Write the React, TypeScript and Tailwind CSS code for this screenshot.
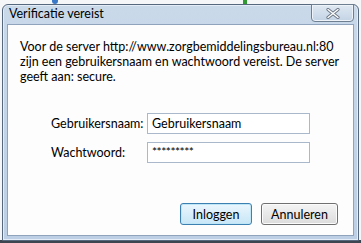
import React from "react";

const font = { fontFamily: 'Lato, "Open Sans", sans-serif' };

function CloseGlyph() {
  return (
    <svg width="14" height="11" viewBox="0 0 14 11">
      <path d="M2 1.5 L12 9.5 M12 1.5 L2 9.5" stroke="#6b7684" strokeWidth="3.2" strokeLinecap="round" />
      <path d="M2 1.5 L12 9.5 M12 1.5 L2 9.5" stroke="#ffffff" strokeWidth="1.4" strokeLinecap="round" />
    </svg>
  );
}

export default function App() {
  return (
    <div className="relative h-[243px] w-[361px] overflow-hidden bg-[#f4f6f8]" style={font}>
      {/* bits of other windows behind */}
      <div className="absolute left-[52px] top-0 h-[4px] w-[6px] rounded-b bg-[#3a78c8]" />
      <div className="absolute left-[243px] top-0 h-[4px] w-[4px] bg-[#2f9a2f]" />
      <div className="absolute bottom-0 left-0 h-[3px] w-full bg-[#3d4650]" />

      <div className="pl-[2px] pt-[4px]">
        <div className="relative flex h-[237px] w-[357px] flex-col rounded-t-[6px] border border-[#56687e] bg-gradient-to-b from-[#c9d9ea] to-[#bccfe4] shadow-[inset_0_0_0_1px_#e4edf7]">
          <div className="flex h-[19px] items-center pl-[6px] text-[12.5px] text-black">
            Verificatie vereist
          </div>
          <button className="absolute right-[4px] top-[-1px] flex h-[18px] w-[43px] items-center justify-center rounded-b-[4px] border border-[#6f7f92] bg-gradient-to-b from-[#dfe8f2] to-[#c3d3e5] shadow-[inset_0_0_0_1px_#eef3f9]">
            <CloseGlyph />
          </button>

          <div className="mx-[4px] mb-[4px] flex flex-1 flex-col border border-[#8fa4bc] bg-[#fdfdfd] text-[12.5px] leading-[15px] text-black">
            <p className="px-[12px] pt-[14px]">
              Voor de server http://www.zorgbemiddelingsbureau.nl:80
              <br />
              zijn een gebruikersnaam en wachtwoord vereist. De server
              <br />
              geeft aan: secure.
            </p>

            <div className="mt-[29px] flex flex-col gap-[8px] pl-[43px]">
              <div className="flex items-center">
                <span className="w-[96px]">Gebruikersnaam:</span>
                <div className="flex h-[21px] w-[163px] items-center border border-[#a9b9cb] bg-white pl-[4px]">
                  Gebruikersnaam
                </div>
              </div>
              <div className="flex items-center">
                <span className="w-[96px]">Wachtwoord:</span>
                <div className="flex h-[21px] w-[163px] items-center border border-[#a9b9cb] bg-white pl-[4px] pb-[3px] text-[12px] tracking-[-0.5px]">
                  *********
                </div>
              </div>
            </div>

            <div className="mt-auto flex justify-end gap-[9px] pb-[10px] pr-[15px]">
              <button className="flex h-[22px] w-[72px] items-center justify-center rounded-[3px] border border-[#3c7fb1] bg-gradient-to-b from-[#eaf6fd] to-[#c8e6f7] shadow-[inset_0_0_0_1px_#bfe6f7]">
                Inloggen
              </button>
              <button className="flex h-[22px] w-[77px] items-center justify-center rounded-[3px] border border-[#707070] bg-gradient-to-b from-[#f4f4f4] to-[#dcdcdc] shadow-[inset_0_0_0_1px_#fbfbfb]">
                Annuleren
              </button>
            </div>
          </div>
        </div>
      </div>
    </div>
  );
}
